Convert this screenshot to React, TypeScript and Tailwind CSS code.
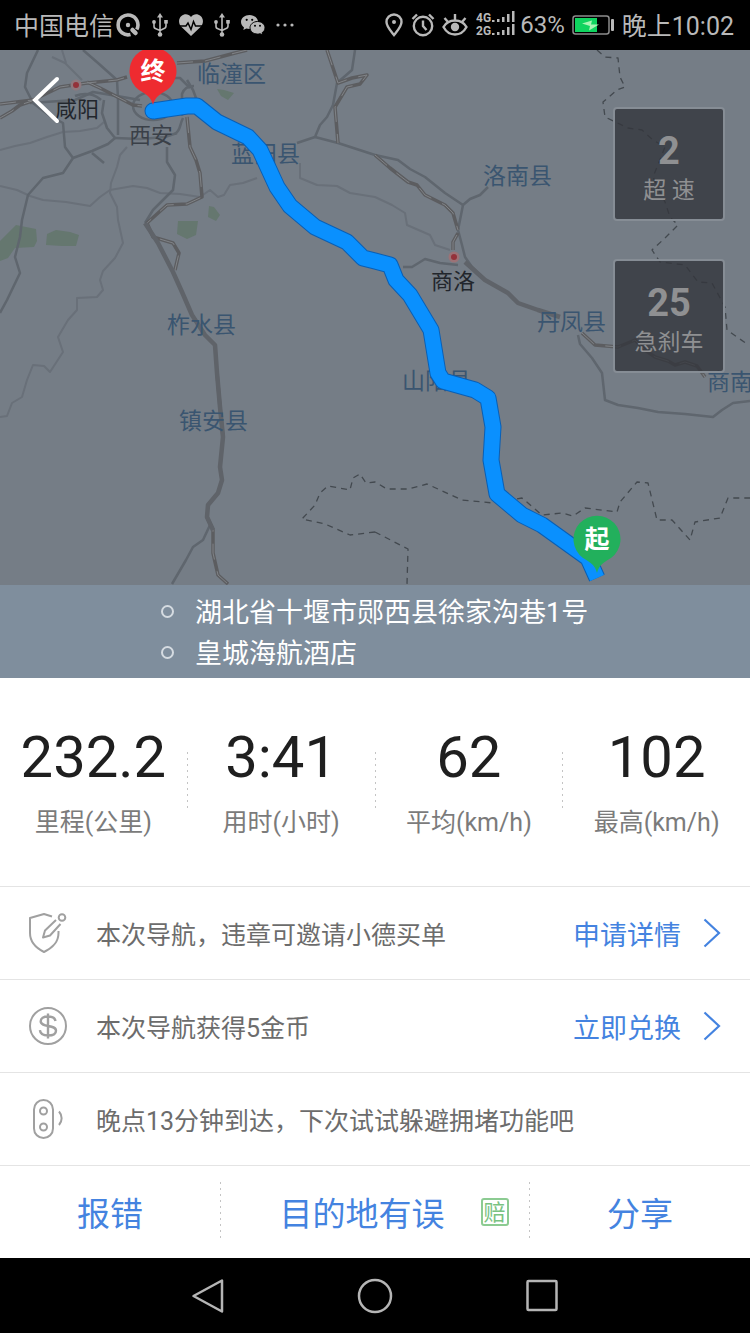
import React from 'react';

type Label = { text: string; x: number; y: number; kind: 'city' | 'dim' | 'county' };

const labels: Label[] = [
  { text: '临潼区', x: 197, y: 82, kind: 'county' },
  { text: '咸阳', x: 55, y: 117, kind: 'city' },
  { text: '西安', x: 129, y: 143, kind: 'dim' },
  { text: '蓝田县', x: 231, y: 162, kind: 'county' },
  { text: '洛南县', x: 483, y: 184, kind: 'county' },
  { text: '商洛', x: 431, y: 289, kind: 'city' },
  { text: '柞水县', x: 167, y: 333, kind: 'county' },
  { text: '丹凤县', x: 537, y: 330, kind: 'county' },
  { text: '山阳县', x: 402, y: 389, kind: 'county' },
  { text: '商南', x: 707, y: 390, kind: 'county' },
  { text: '镇安县', x: 179, y: 429, kind: 'county' },
];

const labelColors = {
  city: '#22262c',
  dim: '#3a4048',
  county: '#3a5570',
};

// Small country roads
const minorRoads = [
  '0,150 15,146 30,143 47,137 63,132 80,131 97,128 104,122',
  '0,186 17,190 30,196 43,200 66,202 90,206 100,197 110,190 133,186 147,188 160,193 180,194 200,197 210,190 218,197 224,195 230,185 243,183 257,178',
  '127,147 120,155 117,167 111,183 110,193 117,207 118,220 123,243 115,258 103,271 100,280 103,290 97,297 77,298 77,310 68,320 58,337 63,352 50,372 44,366 33,365 27,380 22,397 12,403 7,416 0,417',
  '300,163 300,178 317,185 337,186 350,193 375,197 392,205 405,213 407,225 430,235 435,245 450,250',
  '52,57 65,63 82,80',
  '62,50 66,63',
];

// Main grey roads
const mainRoads = [
  '38,50 27,73 25,87 33,103 50,116 63,123 65,147 73,158 63,173 43,178 28,195 22,220 20,237 15,257 20,273 7,300 0,313',
  '73,158 92,151 108,144 115,138 107,128 102,113 104,100',
  '92,153 98,158 104,163',
  '83,50 98,63 117,80 118,98 118,135',
  '30,103 75,100 93,92 117,96 140,100',
  '115,138 140,139 165,137 177,133',
  '167,147 167,162 175,175 173,190 153,210 145,223',
  '375,155 398,160 410,169 425,177 445,193 463,205',
  '355,50 352,70 337,83 333,105 327,117 320,125 315,137 297,143',
  '315,137 338,143 375,155',
  '488,187 480,195 470,199 463,205 458,230 462,245 465,257 472,267 485,280 508,293 518,303 538,310',
  '403,267 412,267 425,259 440,263 458,265',
  '578,335 580,344 592,358 602,373 605,400 618,405 638,408 658,412 685,414 713,417 722,410 733,403 750,401',
  '210,525 203,540 193,547 186,560 172,584',
  '187,80 193,90 196,98 187,106',
  '155,78 180,78 190,88',
];

const darkRoads = [
  '0,104 33,100 60,87 87,83 117,80 127,77',
  '0,118 12,111 20,105 32,101',
  '87,82 100,88 133,105 142,106',
  '177,63 205,61 220,57 235,53 247,50',
  '187,117 190,147 196,160 200,173 202,197 187,204 167,205 147,223 153,237 173,243 179,253 175,270',
  '327,50 338,83 352,78 367,75 360,84 347,87 335,107 338,143',
  '375,155 390,168 408,182 417,185 425,195 445,205 453,213 455,220 458,230',
  '453,250 453,242 458,233',
  '582,333 595,345 618,347 635,340 645,350 655,357 668,361 675,365 685,362 697,366 705,377',
  '217,373 220,407 223,437',
  '207,517 213,530 213,553 218,575 228,584',
];

const thickRoads = [
  '145,223 158,243 173,272 182,292 192,315 205,335 215,345 217,373 220,407 223,437 220,467 222,480 218,493 208,505 207,517 213,530',
  '465,262 485,280 508,293 518,303 538,310 560,317',
];

const borders = [
  '597,50 605,57 618,58 620,77 625,87 617,90 603,102 605,117 628,128 642,130 653,140 665,147 653,177 665,202 670,217 678,225 665,238 652,250 660,262 685,265 698,282 712,283 725,307 727,330 747,344',
  '375,532 350,535 325,524 302,519 315,505 320,493 328,486 350,490 353,478 360,474 366,483 375,482 387,489 408,489 427,484 462,500 493,503 522,498 542,515 562,513 573,516 585,508 617,512 620,502 637,482 648,483 657,520 672,520 690,540 695,522 720,518 728,498 750,498',
  '375,532 408,549 407,584',
];

const route =
  '153,111 187,106 197,106 217,122 248,137 260,150 277,187 290,206 315,227 347,242 363,258 375,261 390,265 396,280 410,295 425,320 431,330 438,373 443,381 475,390 488,398 493,427 491,460 497,494 522,515 542,525 588,558 597,578';

const stats = [
  { value: '232.2', label: '里程(公里)' },
  { value: '3:41', label: '用时(小时)' },
  { value: '62', label: '平均(km/h)' },
  { value: '102', label: '最高(km/h)' },
];

const alerts = [
  { count: 2, label: '超 速' },
  { count: 25, label: '急刹车' },
];

const UsbIcon = () => (
  <svg viewBox="0 0 16 24" className="h-6 w-4" fill="none" stroke="currentColor" strokeWidth="1.6">
    <path d="M8 4v17M2 9v4.5c0 1.6 1 2.2 2.5 2.5L8 17.500M14 9v4c0 1.600-1 2.300-2.500 2.700L8 17.500" />
    <path d="M8 0l3 4.500H5z" fill="currentColor" stroke="none" />
    <circle cx="8" cy="21.500" r="2.300" fill="currentColor" stroke="none" />
    <circle cx="2" cy="9" r="1.900" fill="currentColor" stroke="none" />
    <path d="M12.200 7h3.600v3.600h-3.600z" fill="currentColor" stroke="none" />
  </svg>
);

const StatusBar = () => (
  <header className="flex h-[50px] items-center justify-between bg-black pr-[16px] pl-[14px] text-2xl text-[#b9b9b9]">
    <div className="flex items-center">
      <span className="pt-[3px] text-[25px]">中国电信</span>
      <svg viewBox="0 0 24 24" className="ml-[2px] h-6 w-6" fill="none" stroke="currentColor">
        <path d="M14.500 21.500A9.900 9.900 0 1 1 20.800 16.500" strokeWidth="3.600" />
        <circle cx="12" cy="12" r="2.200" fill="currentColor" stroke="none" />
        <path d="M16.500 17l3 3" strokeWidth="4.500" strokeLinecap="round" />
      </svg>
      <span className="ml-3"><UsbIcon /></span>
      <svg viewBox="0 0 24 22" className="ml-[11px] h-[22px] w-6">
        <path d="M12 22L2 12.500C-.8 9.300-.5 4.500 2.400 2 5.500-.6 9.600-.2 12 3c2.400-3.200 6.500-3.600 9.600-1C24.500 4.500 24.800 9.300 22 12.500z" fill="currentColor" />
        <path d="M0 12h7l2-3 3 6.500 2.500-8 2 4.500H24" fill="none" stroke="#000" strokeWidth="1.500" />
      </svg>
      <span className="ml-[11px]"><UsbIcon /></span>
      <svg viewBox="0 0 24 20" className="ml-[11px] h-5 w-6">
        <path d="M8.500 0C3.800 0 0 3.100 0 7c0 2.200 1.200 4.100 3 5.400L2.300 15l3-1.500c1 .3 2 .5 3.200.5 4.700 0 8.500-3.100 8.500-7S13.200 0 8.500 0z" fill="currentColor" />
        <path d="M16.500 6.500c-4.100 0-7.500 2.800-7.500 6.300s3.400 6.300 7.500 6.300c.9 0 1.800-.1 2.600-.4l2.600 1.300-.6-2.300c1.800-1.200 2.900-2.900 2.900-4.900 0-3.500-3.400-6.300-7.500-6.300z" fill="currentColor" stroke="#000" strokeWidth="1" />
        <g fill="#000">
          <circle cx="5.700" cy="4.800" r="1.100" />
          <circle cx="11.200" cy="4.800" r="1.100" />
          <circle cx="14" cy="10.800" r="1" />
          <circle cx="19" cy="10.800" r="1" />
        </g>
      </svg>
      <svg viewBox="0 0 18 4" className="ml-[11px] h-1 w-[18px]" fill="currentColor">
        <circle cx="2" cy="2" r="1.600" />
        <circle cx="9" cy="2" r="1.600" />
        <circle cx="16" cy="2" r="1.600" />
      </svg>
    </div>
    <div className="flex items-center">
      <svg viewBox="0 0 18 24" className="h-6 w-[18px]" fill="none" stroke="currentColor" strokeWidth="2.400">
        <path d="M9 22C5 17 1.500 13.500 1.500 9a7.500 7.500 0 0 1 15 0c0 4.500-3.500 8-7.500 13z" />
        <circle cx="9" cy="9" r="2" fill="currentColor" stroke="none" />
      </svg>
      <svg viewBox="0 0 24 24" className="ml-2 h-6 w-6" fill="none" stroke="currentColor" strokeWidth="2.400">
        <circle cx="12" cy="13" r="9.200" />
        <path d="M12 7.500V13l3.500 4M1.500 6L6 1.500M22.500 6L18 1.500" />
      </svg>
      <svg viewBox="0 0 26 24" className="ml-[7px] h-6 w-[26px]" fill="none" stroke="currentColor" strokeWidth="2.400">
        <path d="M1.500 14C4 9.700 8 7.500 13 7.500S22 9.700 24.500 14C22 18.600 18 21.500 13 21.500S4 18.600 1.500 14zM13 7V1M6 9L2.500 5M20 9l3.500-4" />
        <circle cx="13" cy="14" r="4.200" fill="currentColor" stroke="none" />
      </svg>
      <svg viewBox="0 -2 40 32" className="ml-2 h-8 w-10" fill="currentColor">
        <g fontFamily="Roboto, sans-serif" fontSize="12" fontWeight="700">
          <text x="0" y="11">4G</text>
          <text x="0" y="24">2G</text>
        </g>
        <path d="M16 9h2.500v2H16zM21 8h2.500v3H21zM26 6h2.500v5H26zM31 3h2.500v8H31zM36 0h2.500v11H36z" />
        <path d="M16 22h2.500v2H16zM21 21h2.500v3H21zM26 19h2.500v5H26zM31 16h2.500v8H31zM36 13h2.500v11H36z" />
      </svg>
      <span className="ml-1">63%</span>
      <svg viewBox="0 0 42 22" className="ml-[7px] h-[22px] w-[42px]">
        <rect x="1" y="2" width="36" height="18" rx="2.500" fill="none" stroke="#8c8c8c" strokeWidth="1.500" />
        <rect x="3" y="4" width="22" height="14" fill="#0fd45f" />
        <rect x="39" y="5" width="3" height="12" rx="1" fill="#b9b9b9" />
        <path d="M10 9.500l10-3-1 4h8l-10 6 1-4.500z" fill="#a9f5b4" />
      </svg>
      <span className="ml-2 pt-[3px] text-[25px]">晚上10:02</span>
    </div>
  </header>
);

const Pin = ({ x, y, fill, text }: { x: number; y: number; fill: string; text: string }) => (
  <g transform={`translate(${x} ${y})`}>
    <path d="M0 34C-2 26-7 23-14 19A23.500 23.500 0 1 1 14 19C7 23 2 26 0 34z" fill={fill} />
    <text y="9" textAnchor="middle" fontSize="25" fontWeight="700" fill="#fff">{text}</text>
  </g>
);

const lines = (list: string[]) => list.map((points) => <polyline key={points} points={points} />);

const RouteMap = () => (
  <svg
    viewBox="0 50 750 535"
    className="block w-full bg-[#757d86]"
    fontFamily="Roboto, 'Noto Sans CJK SC', sans-serif"
    strokeLinejoin="round"
  >
    <g fill="#65776f">
      <path d="M0 241l8-8 8-8 20 4 1 12-3 6-19 1-7 10-8 3z" />
      <path d="M47 234l9-4 14 2 9 3-3 11-14 0-16-1z" />
      <path d="M178 221l20 0-2 14-9 4-10-5z" />
      <path d="M209 206l5 1 6 8-4 6-8-4z" />
      <path d="M217 89l7 1 10 3-6 7-7-4z" />
    </g>
    <g fill="none" stroke="#697079" strokeWidth="2">{lines(minorRoads)}</g>
    <g fill="none" stroke="#5f666e" strokeWidth="2.500">
      {lines(mainRoads)}
      <ellipse cx="153" cy="106" rx="20" ry="14" />
      <path d="M75 96c10-4 20-2 26 4M183 118c-4 8-2 12-8 16M182 116v-22c2-6 6-8 12-8" />
    </g>
    <g fill="none" stroke="#5c5d60" strokeWidth="3.500">{lines(darkRoads)}</g>
    <g fill="none" stroke="#808387" strokeWidth="1" strokeDasharray="16 12">{lines(darkRoads)}</g>
    <g fill="none" stroke="#5f6369" strokeWidth="4.500">{lines(thickRoads)}</g>
    <g fill="none" stroke="#43494f" strokeWidth="1.300" strokeDasharray="6 5">{lines(borders)}</g>
    <g>
      <circle cx="76" cy="85" r="5.500" fill="#8f797e" />
      <circle cx="76" cy="85" r="3" fill="#94323a" />
      <circle cx="454" cy="257" r="5.500" fill="#9c7276" />
      <circle cx="454" cy="257" r="3" fill="#94323a" />
    </g>
    {labels.map((l) => (
      <text key={l.text} x={l.x} y={l.y} fontSize={l.kind === 'county' ? 23 : 22} fill={labelColors[l.kind]}>
        {l.text}
      </text>
    ))}
    <g fill="none">
      <circle cx="153" cy="111" r="8.500" fill="#0a5fb4" />
      <polyline points={route} stroke="#0a5fb4" strokeWidth="17" />
      <circle cx="153" cy="111" r="7.500" fill="#0a90fe" />
      <polyline points={route} stroke="#0a90fe" strokeWidth="15" />
    </g>
    <Pin x={153} y={71} fill="#ee2b30" text="终" />
    <Pin x={597} y={539} fill="#22b05c" text="起" />
  </svg>
);

const ShieldIcon = () => (
  <svg viewBox="0 0 40 40" className="h-10 w-10" fill="none" stroke="#a0a0a0" strokeWidth="2" strokeLinejoin="round">
    <path d="M24 3.500L16 1 2 5v15c0 9 6 15 14 19 8-4 14.500-9 14.500-19v-2" />
    <path d="M28 7L17 17.500l-2 7 7-2L32.500 11" />
    <circle cx="34" cy="4.500" r="3.300" />
  </svg>
);

const CoinIcon = () => (
  <svg viewBox="0 0 40 40" className="h-10 w-10" fill="none" stroke="#a0a0a0" strokeWidth="2">
    <circle cx="20" cy="20" r="18" />
    <path d="M20 7.500v25M27.500 15c-.5-3-3.300-4.500-7.500-4.500-4.500 0-7.300 1.700-7.300 4.700 0 6.600 15.300 3 15.300 9.500 0 3-3.200 4.800-8 4.800s-7.800-2-8.100-5.300" strokeWidth="2.400" />
  </svg>
);

const TrafficIcon = () => (
  <svg viewBox="0 0 40 40" className="h-10 w-10" fill="none" stroke="#a0a0a0" strokeWidth="2">
    <rect x="6" y="1" width="19" height="38" rx="9.500" />
    <circle cx="15.500" cy="12" r="3.500" />
    <circle cx="15.500" cy="28" r="3.500" />
    <path d="M31 12.500c3.500 4 3.500 9.500 0 13.500" />
  </svg>
);

const rows = [
  { icon: <ShieldIcon />, text: '本次导航，违章可邀请小德买单', action: '申请详情' },
  { icon: <CoinIcon />, text: '本次导航获得5金币', action: '立即兑换' },
  { icon: <TrafficIcon />, text: '晚点13分钟到达，下次试试躲避拥堵功能吧' },
];

const DottedLine = () => (
  <span className="h-[60px] w-px bg-[repeating-linear-gradient(to_bottom,#c4c4c4_0_2px,transparent_2px_6px)]" />
);

const App = () => {
  return (
    <div className="w-full bg-white font-[Roboto,'Noto_Sans_CJK_SC',sans-serif]">
      <StatusBar />
      <section className="relative">
        <RouteMap />
        <button aria-label="返回" className="absolute top-[26px] left-[32px]">
          <svg viewBox="0 0 28 48" className="h-12 w-7" fill="none" stroke="#fff" strokeWidth="4" strokeLinecap="round">
            <path d="M25 3L3 24l22 21" />
          </svg>
        </button>
        <div className="absolute top-[57px] right-[25px] flex flex-col gap-[38px]">
          {alerts.map((a) => (
            <div
              key={a.label}
              className="flex h-[114px] w-[112px] flex-col items-center justify-center rounded border-2 border-[#868d95] bg-[#33363c]/80 pt-[14px] text-[#8f9092]"
            >
              <span className="text-[38px] leading-10 font-bold">{a.count}</span>
              <span className="text-[23px] leading-10">{a.label}</span>
            </div>
          ))}
        </div>
      </section>
      <ul className="bg-[#7f8e9d] pt-[6px] pb-[5px] pl-[161px] text-[27px] text-white">
        {['湖北省十堰市郧西县徐家沟巷1号', '皇城海航酒店'].map((place) => (
          <li key={place} className="flex items-center gap-[21px]">
            <span className="h-[13px] w-[13px] rounded-full border-2 border-[#d5dbe1]" />
            <span className="pt-1 leading-[37px]">{place}</span>
          </li>
        ))}
      </ul>
      <section className="flex items-center pt-[42px] pb-[34px]">
        {stats.map((s, i) => (
          <React.Fragment key={s.label}>
            {i > 0 && <span className="mb-2 flex"><DottedLine /></span>}
            <dl className="flex flex-1 basis-0 flex-col-reverse items-center whitespace-nowrap">
              <dt className="text-[25px] leading-[58px] text-[#7b7b7b]">{s.label}</dt>
              <dd className="text-[58px] leading-[74px] text-[#1f1f1f]">{s.value}</dd>
            </dl>
          </React.Fragment>
        ))}
      </section>
      <ul>
        {rows.map((row) => (
          <li key={row.text} className="flex h-[93px] items-center border-t border-[#e4e4e4] pr-[29px] pl-[28px]">
            {row.icon}
            <span className="ml-7 flex-1 pt-[6px] text-[25px] text-[#6c6c6c]">{row.text}</span>
            {row.action && (
              <a href="#" className="flex items-center gap-[22px] text-[27px] text-[#4483e0]">
                <span className="pt-[6px]">{row.action}</span>
                <svg viewBox="0 0 18 30" className="h-[30px] w-[18px]" fill="none" stroke="currentColor" strokeWidth="2.200">
                  <path d="M1.500 1.500L16 15 1.500 28.500" />
                </svg>
              </a>
            )}
          </li>
        ))}
      </ul>
      <div className="grid h-[93px] grid-cols-[5fr_auto_7fr_auto_5fr] items-center border-t border-[#e4e4e4] text-[33px] text-[#4483e0]">
        <button className="pt-[6px]">报错</button>
        <DottedLine />
        <button className="flex items-center justify-center gap-[36px] pl-[38px]">
          <span className="pt-[6px]">目的地有误</span>
          <span className="flex h-7 w-7 items-center justify-center rounded-[3px] border-2 border-[#8ccb92] pt-[2px] text-[22px] leading-none text-[#79c281]">
            赔
          </span>
        </button>
        <DottedLine />
        <button className="pt-[6px]">分享</button>
      </div>
      <nav className="flex h-[75px] items-center justify-center gap-[131px] bg-black text-[#b5b5b5]">
        <button aria-label="后退">
          <svg viewBox="0 0 36 36" className="h-9 w-9" fill="none" stroke="currentColor" strokeWidth="2.500" strokeLinejoin="round">
            <path d="M32 2.500v31L3.500 18z" />
          </svg>
        </button>
        <button aria-label="主页">
          <svg viewBox="0 0 36 36" className="h-9 w-9" fill="none" stroke="currentColor" strokeWidth="2.500">
            <circle cx="18" cy="18" r="16" />
          </svg>
        </button>
        <button aria-label="最近任务">
          <svg viewBox="0 0 36 36" className="h-9 w-9" fill="none" stroke="currentColor" strokeWidth="2.500">
            <rect x="3.500" y="3" width="29" height="29" rx="1" />
          </svg>
        </button>
      </nav>
    </div>
  );
};

export default App;
